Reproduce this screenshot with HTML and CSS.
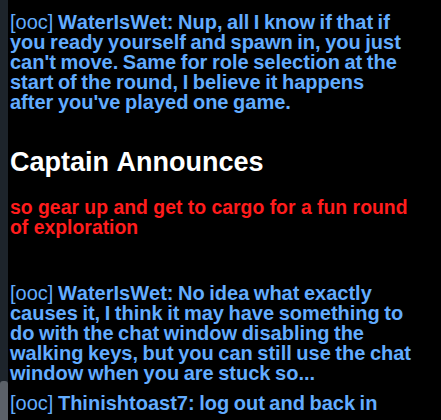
FILE: index.html
```html
<!DOCTYPE html>
<html lang="en">
<head>
<meta charset="UTF-8">
<title>Chat</title>
<link rel="stylesheet" href="styles.css">
</head>
<body>
    <div class="chat-window">
        <div class="scroll-track">
            <div class="scroll-thumb"></div>
        </div>
        <div class="messages">
            <div class="msg ooc"><span class="prefix">[ooc]</span> <span class="name">WaterIsWet:</span> Nup, all I know if that if you ready yourself and spawn in, you just can't move. Same for role selection at the start of the round, I believe it happens after you've played one game.</div>

            <div class="announce">
                <h1 class="announce-title">Captain Announces</h1>
                <p class="announce-text">so gear up and get to cargo for a fun round of exploration</p>
            </div>

            <div class="msg ooc"><span class="prefix">[ooc]</span> <span class="name">WaterIsWet:</span> No idea what exactly causes it, I think it may have something to do with the chat window disabling the walking keys, but you can still use the chat window when you are stuck so...</div>
            <div class="msg ooc"><span class="prefix">[ooc]</span> <span class="name">Thinishtoast7:</span> log out and back in</div>
        </div>
    </div>
</body>
</html>
```
FILE: styles.css
```css
body {
    margin: 0;
    background-color: #000;
    font-family: "Liberation Sans", Arial, sans-serif;
    font-kerning: none;
    overflow: hidden;
}

.chat-window {
    display: flex;
    height: 420px;
}

/* thin scrollbar on the left edge */
.scroll-track {
    width: 8px;
    flex-shrink: 0;
    background-color: #1d242b;
    display: flex;
    flex-direction: column;
    justify-content: flex-end;
}

.scroll-thumb {
    height: 39px;
    background-color: #5b6168;
    border-radius: 3px 3px 0 0;
}

.messages {
    padding: 12px 29px 0 2px;
    min-width: 0;
}

.msg {
    font-size: 20px;
    line-height: 20px;
    font-weight: bold;
    word-spacing: -1px;
    margin-bottom: 10px;
}

.ooc {
    color: #62acff;
}

.ooc .prefix {
    font-weight: normal;
}

.announce {
    margin: 35px 0 46px;
}

.announce-title {
    margin: 0 0 20px;
    color: #fff;
    font-size: 27px;
    line-height: 30px;
}

.announce-text {
    margin: 0;
    color: #ff1c1c;
    font-size: 19.4px;
    line-height: 20px;
    font-weight: bold;
}
```
